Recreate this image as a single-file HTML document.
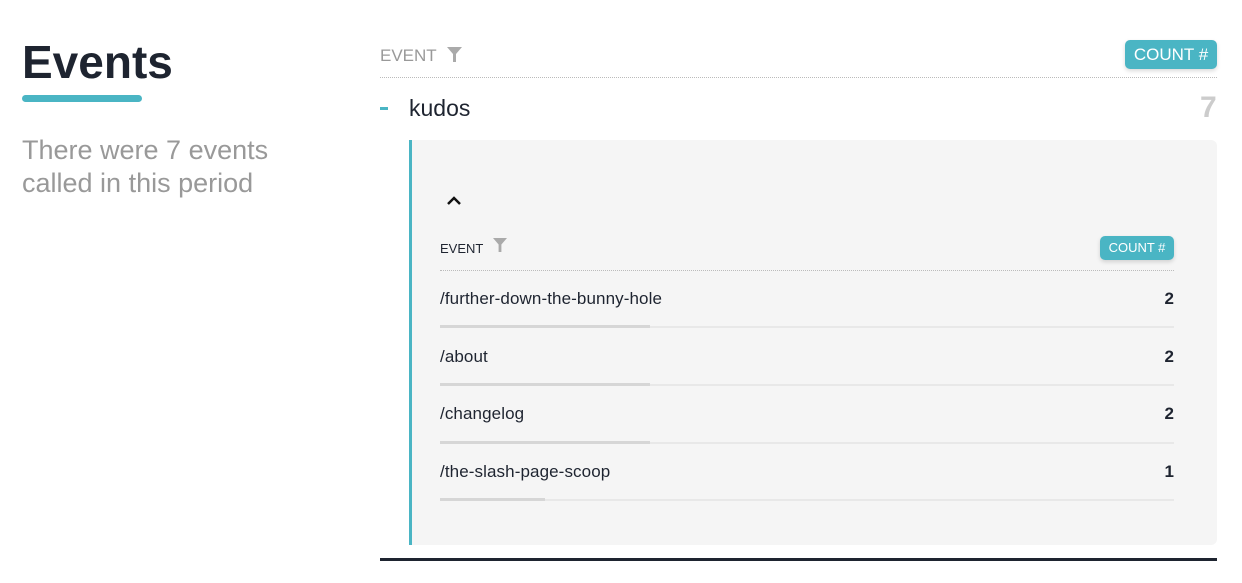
<!DOCTYPE html>
<html><head><meta charset="utf-8"><style>
*{margin:0;padding:0;box-sizing:border-box}
body{width:1242px;height:583px;background:#fff;font-family:"Liberation Sans",sans-serif;color:#1e2430;position:relative;overflow:hidden}
.abs{position:absolute}
h1{position:absolute;left:22px;top:35px;font-size:46px;font-weight:bold;color:#1e2430}
.bar{left:22px;top:95px;width:120px;height:7px;border-radius:4px;background:#4ab5c4}
.desc{left:22px;top:134px;font-size:27px;line-height:33px;color:#999;width:300px}
.btn{background:#4ab5c4;color:#fff;border-radius:5px;box-shadow:0 2px 4px rgba(0,0,0,.15);text-align:center}
.dot{border-top:1px dotted #bbb}
.row{position:absolute;left:440px;width:734px;font-size:17px;letter-spacing:0.1px;color:#1e2430}
.row .n{position:absolute;right:0;top:0;font-weight:bold}
.row .track{position:absolute;left:0;top:28px;width:734px;height:2px;background:#e8e8e8}
.row .fill{position:absolute;left:0;top:28px;height:3px;background:#d6d6d6}
</style></head><body>
<h1>Events</h1>
<div class="abs bar"></div>
<div class="abs desc">There were 7 events called in this period</div>

<div class="abs" style="left:380px;top:46px;font-size:17px;color:#999">EVENT</div>
<svg class="abs" style="left:447px;top:47px" width="15" height="15" viewBox="0 0 15 15"><path d="M0 0H15L9 7V15H6V7Z" fill="#aaa"/></svg>
<div class="abs btn" style="left:1125px;top:40px;width:92px;height:29px;font-size:17px;line-height:29px">COUNT #</div>
<div class="abs dot" style="left:380px;top:77px;width:837px"></div>

<div class="abs" style="left:380px;top:107px;width:8px;height:3px;background:#4ab5c4"></div>
<div class="abs" style="left:409px;top:95px;font-size:23px">kudos</div>
<div class="abs" style="left:1200px;top:91px;font-size:30px;font-weight:bold;color:#ccc">7</div>

<div class="abs" style="left:409px;top:140px;width:808px;height:405px;background:#f5f5f5;border-left:3px solid #4ab5c4;border-radius:0 6px 6px 0"></div>
<svg class="abs" style="left:446px;top:194px" width="16" height="12" viewBox="0 0 16 12"><path d="M2 10L8 4L14 10" stroke="#111" stroke-width="2.5" fill="none"/></svg>

<div class="abs" style="left:440px;top:241px;font-size:13px;color:#1e2430">EVENT</div>
<svg class="abs" style="left:493px;top:238px" width="14" height="14" viewBox="0 0 15 15"><path d="M0 0H15L9 7V15H6V7Z" fill="#aaa"/></svg>
<div class="abs btn" style="left:1100px;top:236px;width:74px;height:24px;font-size:13px;line-height:24px">COUNT #</div>
<div class="abs dot" style="left:440px;top:270px;width:734px"></div>

<div class="row" style="top:289px">/further-down-the-bunny-hole<span class="n">2</span><div class="track" style="top:37px"></div><div class="fill" style="top:36px;width:210px"></div></div>
<div class="row" style="top:347px">/about<span class="n">2</span><div class="track" style="top:37px"></div><div class="fill" style="top:36px;width:210px"></div></div>
<div class="row" style="top:404px">/changelog<span class="n">2</span><div class="track" style="top:38px"></div><div class="fill" style="top:37px;width:210px"></div></div>
<div class="row" style="top:462px">/the-slash-page-scoop<span class="n">1</span><div class="track" style="top:37px"></div><div class="fill" style="top:36px;width:105px"></div></div>

<div class="abs" style="left:380px;top:558px;width:837px;height:3px;background:#1e2430"></div>
</body></html>
